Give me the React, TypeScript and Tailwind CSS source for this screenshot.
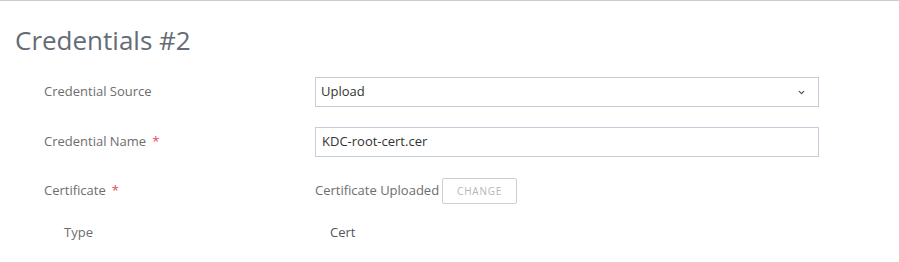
import { ChevronDown } from "lucide-react";

const font = { fontFamily: '"Open Sans", "Noto Sans", sans-serif' };

function Label({ text, required, indent }: { text: string; required?: boolean; indent?: boolean }) {
  return (
    <div className={`w-[271px] shrink-0 text-[13px] text-[#6d6d6d] ${indent ? "pl-[20px]" : ""}`}>
      {text}
      {required && <span className="ml-[6px] text-[#e8474f]">*</span>}
    </div>
  );
}

export default function App() {
  return (
    <div className="w-[899px] h-[262px] bg-white border-t border-[#cccccc] overflow-hidden" style={font}>
      <h1 className="pl-[15px] pt-[22px] text-[26px] leading-[34px] text-[#646c76]">Credentials #2</h1>

      <div className="pl-[44px] pt-[20px] flex flex-col">
        {/* Credential Source */}
        <div className="flex items-center h-[30px]">
          <Label text="Credential Source" />
          <div className="w-[504px] h-[30px] border border-[#c3ced8] flex items-center justify-between pl-[5px] pr-[12px] text-[13px] text-[#333]">
            <span>Upload</span>
            <ChevronDown size={9} strokeWidth={3.5} className="text-[#555]" />
          </div>
        </div>

        {/* Credential Name */}
        <div className="flex items-center h-[30px] mt-[20px]">
          <Label text="Credential Name" required />
          <div className="w-[504px] h-[30px] border border-[#c3ced8] flex items-center pl-[6px] text-[13px] text-[#333]">
            KDC-root-cert.cer
          </div>
        </div>

        {/* Certificate */}
        <div className="flex items-center h-[26px] mt-[21px]">
          <Label text="Certificate" required />
          <span className="text-[13px] text-[#6d6d6d]">Certificate Uploaded</span>
          <button className="ml-[3px] w-[75px] h-[26px] border border-[#cfcfcf] rounded-[2px] text-[10px] tracking-[0.08em] text-[#b5b5b5]">
            CHANGE
          </button>
        </div>

        {/* Type */}
        <div className="flex items-center h-[20px] mt-[19px]">
          <Label text="Type" indent />
          <span className="pl-[15px] text-[13px] text-[#555]">Cert</span>
        </div>
      </div>
    </div>
  );
}
